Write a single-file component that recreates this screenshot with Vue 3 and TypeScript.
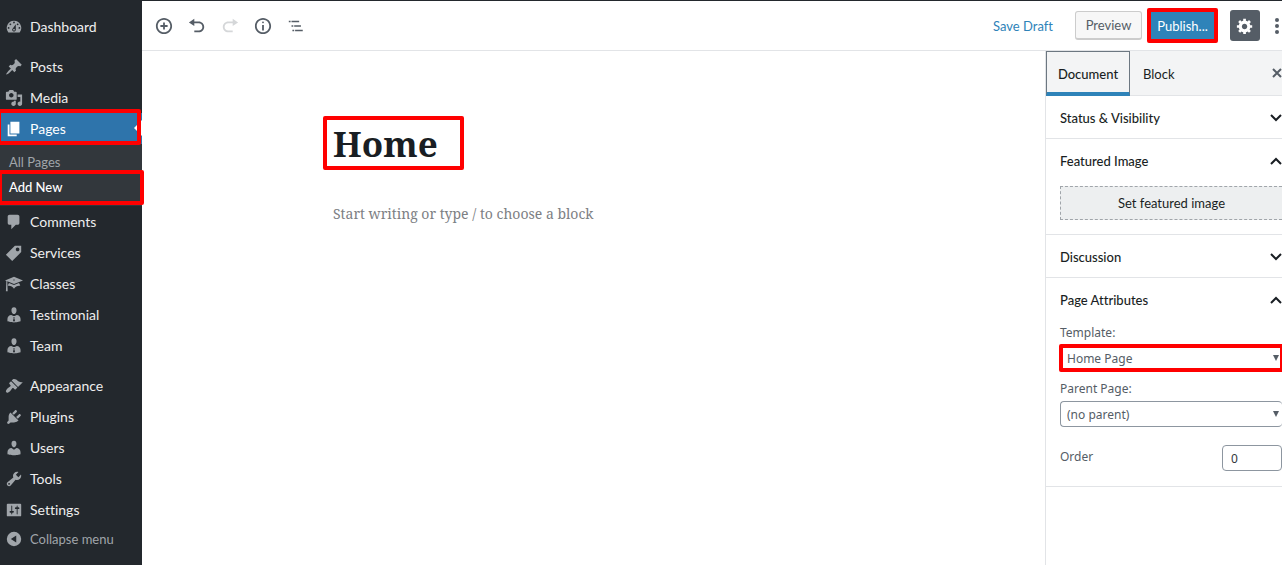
<script setup lang="ts">
import { ref } from 'vue'

interface MenuItem {
  label: string
  icon: string
  current?: boolean
}

const icons = {
  dashboard: 'M3.76 16h12.48A7.998 7.998 0 0 0 10 3a7.998 7.998 0 0 0-6.24 13zM10 4c.55 0 1 .45 1 1s-.45 1-1 1-1-.45-1-1 .45-1 1-1zM6 6c.55 0 1 .45 1 1s-.45 1-1 1-1-.45-1-1 .45-1 1-1zm8 0c.55 0 1 .45 1 1s-.45 1-1 1-1-.45-1-1 .45-1 1-1zm-5.37 5.55L12 7v6c0 1.1-.9 2-2 2s-2-.9-2-2c0-.57.24-1.08.63-1.45zM4 10c.55 0 1 .45 1 1s-.45 1-1 1-1-.45-1-1 .45-1 1-1zm12 0c.55 0 1 .45 1 1s-.45 1-1 1-1-.45-1-1 .45-1 1-1zm-5 3c0-.55-.45-1-1-1s-1 .45-1 1 .45 1 1 1 1-.45 1-1z',
  pin: 'M10.44 3.02l1.82-1.82 6.36 6.35-1.83 1.82c-1.05-.68-2.48-.57-3.41.36l-.75.75c-.92.93-1.04 2.35-.35 3.41l-1.83 1.82-2.41-2.41-2.8 2.79c-.42.42-3.38 2.71-3.8 2.29s1.86-3.39 2.28-3.81l2.79-2.79L4.1 9.36l1.83-1.82c1.05.69 2.48.57 3.4-.36l.75-.75c.93-.92 1.05-2.35.36-3.41z',
  media: 'M13 11V4c0-.55-.45-1-1-1h-1.67L9 1H5L3.67 3H2c-.55 0-1 .45-1 1v7c0 .55.45 1 1 1h10c.55 0 1-.45 1-1zM7 4.5c1.38 0 2.5 1.12 2.5 2.5S8.38 9.5 7 9.5 4.5 8.38 4.5 7 5.62 4.5 7 4.5zM14 6h5v10.5c0 1.38-1.12 2.5-2.5 2.5S14 17.88 14 16.5s1.12-2.5 2.5-2.5c.17 0 .34.02.5.05V9h-3V6zm-4 8.05V13h2v3.5c0 1.38-1.12 2.5-2.5 2.5S7 17.88 7 16.5 8.12 14 9.5 14c.17 0 .34.02.5.05z',
  page: 'M6 15V2h10v13H6zm-1 1h8v2H3V5h2v11z',
  comment: 'M5 2h9c1.1 0 2 .9 2 2v7c0 1.1-.9 2-2 2h-2l-5 5v-5H5c-1.1 0-2-.9-2-2V4c0-1.1.9-2 2-2z',
  tag: 'M11 2h7v7L8 19l-7-7zm3 6c1.1 0 2-.9 2-2s-.9-2-2-2-2 .9-2 2 .9 2 2 2z',
  learn: 'M10 10L2.54 7.02 3 18H1l.48-11.41L0 6l10-4 10 4zm0-5c-.55 0-1 .22-1 .5s.45.5 1 .5 1-.22 1-.5-.45-.5-1-.5zm0 6l5.57-2.23c.71.94 1.2 2.07 1.36 3.3-.3-.04-.61-.07-.93-.07-2.55 0-4.78 1.37-6 3.41C8.78 13.37 6.55 12 4 12c-.32 0-.63.03-.93.07.16-1.23.65-2.36 1.36-3.3z',
  business: 'M10 9C7.7 9 7.2 5.8 7.2 5.3 7 3.5 7.8 1.5 10 1.5s3 2 2.8 3.8C12.800 5.800 12.300 9 10 9zM7 10l2.200 1.200h1.600L13 10c2.500 0 4.300 2.200 4.300 4.500V17s-3.700 1.200-7.300 1.200S2.700 17 2.700 17v-2.500C2.700 12.200 4.500 10 7 10zm2.300 2.200.4 1.200-.8 3.100 1.100 1.100 1.100-1.100-.8-3.100.4-1.200z',
  brush: 'M14.48 11.06L7.41 3.99l1.5-1.5c.5-.56 2.3-.47 3.51.32 1.21.8 1.43 1.28 2.91 2.1 1.18.64 2.45 1.26 4.45.85zm-.71.71L6.7 4.7 4.93 6.47c-.39.39-.39 1.02 0 1.41l1.06 1.06c.39.39.39 1.03 0 1.42-.6.6-1.43 1.11-2.21 1.69-.35.26-.7.53-1.01.84C1.43 14.23.4 16.08 1.4 17.07c.99 1 2.84-.03 4.18-1.36.31-.31.58-.66.85-1.02.57-.78 1.08-1.61 1.69-2.21.39-.39 1.02-.39 1.41 0l1.06 1.06c.39.39 1.02.39 1.41 0z',
  plug: 'M13.11 4.36L9.87 7.6 8 5.73l3.24-3.24c.35-.34 1.05-.2 1.56.32.52.51.66 1.21.31 1.55zm-8 1.77l.91-1.12 9.01 9.01-1.19.84c-.71.71-2.63 1.16-3.82 1.16H6.14L4.9 17.26c-.59.59-1.54.59-2.12 0-.59-.58-.59-1.53 0-2.12l1.24-1.24v-3.88c0-1.13.4-3.19 1.09-3.89zm7.26 3.97l3.24-3.24c.34-.35 1.04-.21 1.55.31.52.51.66 1.21.31 1.55l-3.24 3.25z',
  user: 'M10 9.25c-2.27 0-2.73-3.44-2.73-3.44C7 4.02 7.82 2 9.97 2c2.16 0 2.98 2.02 2.71 3.81 0 0-.41 3.44-2.68 3.44zm0 2.57L12.72 10c2.39 0 4.52 2.33 4.52 4.53v2.49s-3.65 1.13-7.24 1.13c-3.65 0-7.24-1.13-7.24-1.13v-2.49c0-2.25 1.94-4.48 4.47-4.48z',
  wrench: 'M16.68 9.77c-1.34 1.34-3.3 1.67-4.95.99l-5.41 6.52c-.99.99-2.59.99-3.58 0s-.99-2.59 0-3.57l6.52-5.42c-.68-1.65-.35-3.61.99-4.95 1.28-1.28 3.12-1.62 4.72-1.06l-2.89 2.89 2.82 2.82 2.86-2.87c.53 1.58.18 3.39-1.08 4.65zM3.81 16.21c.4.39 1.04.39 1.43 0 .4-.4.4-1.04 0-1.43-.39-.4-1.03-.4-1.43 0-.39.39-.39 1.03 0 1.43z',
  sliders: 'M18 16V4c0-.55-.45-1-1-1H3c-.55 0-1 .45-1 1v12c0 .55.45 1 1 1h14c.55 0 1-.45 1-1zM8 11h1c.55 0 1 .45 1 1s-.45 1-1 1H8v1.5c0 .28-.22.5-.5.5s-.5-.22-.5-.5V13H6c-.55 0-1-.45-1-1s.45-1 1-1h1V5.5c0-.28.22-.5.5-.5s.5.22.5.5V11zm5-2h-1c-.55 0-1-.45-1-1s.45-1 1-1h1V5.5c0-.28.22-.5.5-.5s.5.22.5.5V7h1c.55 0 1 .45 1 1s-.45 1-1 1h-1v5.5c0 .28-.22.5-.5.5s-.5-.22-.5-.5V9z',
  collapse: 'M10 2a8 8 0 1 0 0 16 8 8 0 0 0 0-16zm2.500 4v8L6.500 10z',
  insert: 'M10 1c-5 0-9 4-9 9s4 9 9 9 9-4 9-9-4-9-9-9zm0 16c-3.9 0-7-3.1-7-7s3.1-7 7-7 7 3.1 7 7-3.1 7-7 7zm1-11H9v3H6v2h3v3h2v-3h3V9h-3V6z',
  undo: 'M12 5H7V2L1 6l6 4V7h5c2.2 0 4 1.8 4 4s-1.8 4-4 4H7v2h5c3.3 0 6-2.7 6-6s-2.7-6-6-6z',
  redo: 'M8 5h5V2l6 4-6 4V7H8c-2.2 0-4 1.8-4 4s1.800 4 4 4h5v2H8c-3.3 0-6-2.7-6-6s2.7-6 6-6z',
  info: 'M9 15h2V9H9v6zm1-10c-.5 0-1 .5-1 1s.5 1 1 1 1-.5 1-1-.5-1-1-1zm0-4c-5 0-9 4-9 9s4 9 9 9 9-4 9-9-4-9-9-9zm0 16c-3.900 0-7-3.100-7-7s3.100-7 7-7 7 3.100 7 7-3.100 7-7 7z',
  outline: 'M2 4.200h2v1.600H2zM5 4.200h8.500v1.600H5zM5 9.200h2v1.600H5zM8 9.200h7.500v1.600H8zM6 14.200h2v1.600H6zM9 14.200h8.500v1.600H9z',
  gear: 'M18 12h-2.18c-.17.7-.44 1.35-.81 1.93l1.54 1.54-2.1 2.1-1.54-1.54c-.58.36-1.23.63-1.91.79V19H8v-2.18c-.68-.16-1.33-.43-1.91-.79l-1.54 1.54-2.12-2.12 1.54-1.54c-.36-.58-.63-1.23-.79-1.91H1V9.03h2.17c.16-.7.44-1.35.8-1.94L2.43 5.55l2.1-2.1 1.54 1.54c.58-.37 1.24-.64 1.93-.81V2h3v2.18c.68.16 1.33.43 1.91.79l1.54-1.54 2.12 2.12-1.54 1.54c.36.59.64 1.24.8 1.94H18V12zm-8.500 1.500c1.660 0 3-1.340 3-3s-1.340-3-3-3-3 1.340-3 3 1.340 3 3 3z',
}

const groups: MenuItem[][] = [
  [{ label: 'Dashboard', icon: icons.dashboard }],
  [
    { label: 'Posts', icon: icons.pin },
    { label: 'Media', icon: icons.media },
    { label: 'Pages', icon: icons.page, current: true },
    { label: 'Comments', icon: icons.comment },
    { label: 'Services', icon: icons.tag },
    { label: 'Classes', icon: icons.learn },
    { label: 'Testimonial', icon: icons.business },
    { label: 'Team', icon: icons.business },
  ],
  [
    { label: 'Appearance', icon: icons.brush },
    { label: 'Plugins', icon: icons.plug },
    { label: 'Users', icon: icons.user },
    { label: 'Tools', icon: icons.wrench },
    { label: 'Settings', icon: icons.sliders },
  ],
]

const tools = [
  { label: 'Add block', icon: icons.insert, disabled: false },
  { label: 'Undo', icon: icons.undo, disabled: false },
  { label: 'Redo', icon: icons.redo, disabled: true },
  { label: 'Content structure', icon: icons.info, disabled: false },
  { label: 'Block navigation', icon: icons.outline, disabled: false },
]

const title = ref('Home')
const template = ref('Home Page')
const parent = ref('(no parent)')
const order = ref('0')
</script>

<template>
  <div class="app">
    <nav class="menu" aria-label="Main menu">
      <ul v-for="(group, g) in groups" :key="g" class="group">
        <li v-for="item in group" :key="item.label">
          <a href="#" class="item" :class="{ current: item.current, marked: item.current }">
            <svg viewBox="0 0 20 20" aria-hidden="true"><path :d="item.icon" fill-rule="evenodd" /></svg>
            <span>{{ item.label }}</span>
          </a>
          <ul v-if="item.current" class="submenu">
            <li><a href="#">All Pages</a></li>
            <li><a href="#" class="active marked">Add New</a></li>
          </ul>
        </li>
      </ul>
      <button type="button" class="collapse">
        <svg viewBox="0 0 20 20" aria-hidden="true"><path :d="icons.collapse" fill-rule="evenodd" /></svg>
        <span>Collapse menu</span>
      </button>
    </nav>

    <div class="editor">
      <header class="topbar">
        <div class="tools">
          <button v-for="tool in tools" :key="tool.label" type="button" :aria-label="tool.label" :disabled="tool.disabled">
            <svg viewBox="0 0 20 20" aria-hidden="true"><path :d="tool.icon" /></svg>
          </button>
        </div>
        <div class="actions">
          <button type="button" class="draft">Save Draft</button>
          <button type="button" class="preview">Preview</button>
          <button type="button" class="publish marked">Publish...</button>
          <button type="button" class="gear" aria-label="Settings">
            <svg viewBox="0 0 20 20" aria-hidden="true"><path :d="icons.gear" fill-rule="evenodd" /></svg>
          </button>
          <button type="button" class="more" aria-label="More options">
            <svg viewBox="0 0 6 18" aria-hidden="true"><circle cx="3" cy="3" r="2" /><circle cx="3" cy="9" r="2" /><circle cx="3" cy="15" r="2" /></svg>
          </button>
        </div>
      </header>

      <div class="body">
        <main class="canvas">
          <div class="title marked">
            <input v-model="title" type="text" aria-label="Page title" />
          </div>
          <p class="prompt">Start writing or type / to choose a block</p>
        </main>

        <aside class="panel">
          <div class="tabs">
            <button type="button" class="tab selected">Document</button>
            <button type="button" class="tab">Block</button>
            <button type="button" class="close" aria-label="Close settings">
              <svg viewBox="0 0 10 10" aria-hidden="true"><path d="M1 1l8 8M9 1L1 9" /></svg>
            </button>
          </div>

          <section>
            <button type="button" class="heading">
              Status &amp; Visibility
              <svg viewBox="0 0 12 8" aria-hidden="true"><path d="M1 1l5 5 5-5" /></svg>
            </button>
          </section>
          <section class="image">
            <button type="button" class="heading">
              Featured Image
              <svg viewBox="0 0 12 8" aria-hidden="true"><path d="M1 7l5-5 5 5" /></svg>
            </button>
            <button type="button" class="drop">Set featured image</button>
          </section>
          <section>
            <button type="button" class="heading">
              Discussion
              <svg viewBox="0 0 12 8" aria-hidden="true"><path d="M1 1l5 5 5-5" /></svg>
            </button>
          </section>
          <section class="attributes">
            <button type="button" class="heading">
              Page Attributes
              <svg viewBox="0 0 12 8" aria-hidden="true"><path d="M1 7l5-5 5 5" /></svg>
            </button>
            <label for="template">Template:</label>
            <div class="select marked">
              <select id="template" v-model="template"><option>Home Page</option></select>
              <svg viewBox="0 0 6 6" aria-hidden="true"><path d="M0 0h6L3 6z" /></svg>
            </div>
            <label for="parent">Parent Page:</label>
            <div class="select">
              <select id="parent" v-model="parent"><option>(no parent)</option></select>
              <svg viewBox="0 0 6 6" aria-hidden="true"><path d="M0 0h6L3 6z" /></svg>
            </div>
            <div class="order">
              <label for="order">Order</label>
              <input id="order" v-model="order" type="text" inputmode="numeric" />
            </div>
          </section>
        </aside>
      </div>
    </div>
  </div>
</template>

<style>
body {
  margin: 0;
}
</style>

<style scoped>
* {
  box-sizing: border-box;
}
.app {
  display: flex;
  min-height: 100vh;
  overflow: hidden;
  background: #fff;
  border-top: 1px solid #23282d;
  font-family: Lato, "Open Sans", sans-serif;
  font-size: 13px;
  font-variant-ligatures: none;
  color: #191e23;
}
button,
input,
select {
  margin: 0;
  padding: 0;
  border: 0;
  background: none;
  font: inherit;
  font-variant-ligatures: none;
  color: inherit;
}
ul {
  margin: 0;
  padding: 0;
  list-style: none;
}
a {
  color: inherit;
  text-decoration: none;
}
svg {
  display: block;
  flex: none;
  fill: currentColor;
}

/* Red highlight frames */
.marked {
  position: relative;
}
.marked::after {
  content: "";
  position: absolute;
  inset: -4px;
  border: 4px solid #f00;
  border-radius: 2px;
  pointer-events: none;
  z-index: 2;
}

.menu {
  flex: none;
  width: 142px;
  padding-top: 10px;
  background: #23282d;
  color: #eee;
  font-size: 14px;
}
.group {
  margin-bottom: 9px;
}
.group:last-of-type {
  margin-bottom: 0;
}
.item,
.collapse {
  display: flex;
  align-items: center;
  gap: 7px;
  height: 31px;
  padding-left: 5px;
}
.item svg,
.collapse svg {
  width: 18px;
  height: 18px;
  color: #a0a5aa;
}
.item.current {
  background: #2e74ab;
  color: #fff;
}
.item.current svg {
  color: #fff;
}
.item.current::before {
  content: "";
  position: absolute;
  right: 0;
  top: 7px;
  border: 8px solid transparent;
  border-right-color: #fff;
  border-left-width: 0;
}
.item.current::after {
  inset: -4px 1px -1px -3px;
}
.submenu {
  padding: 6px 0;
  background: #32373c;
  color: #a0a5aa;
  font-size: 13px;
}
.submenu a {
  display: block;
  height: 25px;
  padding-left: 9px;
  line-height: 25px;
}
.submenu .active {
  color: #fff;
  font-weight: 500;
}
.submenu .active::after {
  inset: -5px -2px -5px -2px;
}
.collapse {
  height: 27px;
  color: #a0a5aa;
  font-size: 13px;
}

.editor {
  flex: 1;
  min-width: 0;
  display: flex;
  flex-direction: column;
}
.topbar {
  display: flex;
  align-items: center;
  justify-content: space-between;
  height: 50px;
  padding: 0 2px 0 13px;
  border-bottom: 1px solid #e2e4e7;
  color: #555d66;
}
.tools {
  display: flex;
  gap: 15px;
}
.tools svg {
  width: 18px;
  height: 18px;
}
.tools button:disabled {
  color: #d5d7d9;
}
.actions {
  display: flex;
  align-items: center;
}
.draft {
  margin-right: 22px;
  color: #2e83b9;
}
.preview {
  width: 67px;
  height: 29px;
  margin-right: 9px;
  border: 1px solid #ccc;
  border-bottom-width: 2px;
  border-radius: 3px;
  background: #f7f7f7;
}
.publish {
  width: 63px;
  height: 27px;
  margin-right: 16px;
  background: #2e83b9;
  color: #fff;
}
.gear {
  display: grid;
  place-items: center;
  width: 30px;
  height: 31px;
  margin-right: 14px;
  border-radius: 3px;
  background: #555d66;
  color: #fff;
}
.gear svg {
  width: 18px;
  height: 18px;
}
.more svg {
  width: 6px;
  height: 18px;
}

.body {
  flex: 1;
  display: flex;
}
.canvas {
  flex: 1;
  min-width: 0;
  padding: 69px 24px 0 185px;
  font-family: "Noto Serif", "Liberation Serif", serif;
}
.title {
  width: 133px;
  height: 46px;
}
.title input {
  width: 100%;
  height: 100%;
  padding-left: 6px;
  font-size: 35px;
  font-weight: 700;
  outline: 0;
}
.prompt {
  margin: 38px 0 0 6px;
  font-size: 14px;
  line-height: 20px;
  color: #7d8084;
}

.panel {
  flex: none;
  width: 237px;
  border-left: 1px solid #e2e4e7;
}
.tabs {
  display: flex;
  align-items: center;
  height: 45px;
  border-bottom: 1px solid #e2e4e7;
  background: #f3f4f5;
}
.tab {
  height: 45px;
  padding: 0 13px;
  align-self: flex-start;
}
.selected {
  width: 84px;
  padding: 3px 0 0;
  border: 1px solid #6c7781;
  border-bottom: 4px solid #2e83b9;
  font-weight: 500;
}
.close {
  margin-left: auto;
}
.close svg {
  width: 10px;
  height: 10px;
  stroke: #555d66;
  stroke-width: 2;
}
section {
  padding-left: 14px;
  border-bottom: 1px solid #e2e4e7;
}
.heading {
  display: flex;
  align-items: center;
  justify-content: space-between;
  width: 100%;
  height: 42px;
  padding-top: 1px;
  font-weight: 500;
}
.heading svg {
  width: 12px;
  height: 8px;
  fill: none;
  stroke: currentColor;
  stroke-width: 2;
}
.image {
  padding-bottom: 14px;
}
.drop {
  width: 100%;
  height: 34px;
  margin-top: 5px;
  border: 1px dashed #a0a5aa;
  border-right: 0;
  background: #edeff0;
}
.attributes {
  padding-bottom: 15px;
  font-family: "Noto Sans", sans-serif;
  font-size: 12px;
  color: #555d66;
}
.attributes .heading {
  height: 43px;
  padding-top: 0;
  font-family: Lato, "Open Sans", sans-serif;
  font-size: 13px;
  color: #191e23;
}
.attributes label {
  display: block;
  line-height: 24px;
}
.select {
  display: flex;
  align-items: center;
  height: 26px;
  margin-bottom: 6px;
  padding-right: 3px;
  border: 1px solid #8d96a0;
  border-right: 0;
  border-radius: 4px;
}
.select select {
  flex: 1;
  height: 24px;
  padding-left: 6px;
  appearance: none;
}
.select svg {
  width: 6px;
  height: 6px;
}
.select.marked::after {
  inset: -2px -2px -2px -2px;
}
.order {
  display: flex;
  align-items: flex-start;
  justify-content: space-between;
  margin-top: 18px;
}
.order input {
  width: 60px;
  height: 26px;
  padding-left: 8px;
  border: 1px solid #8d96a0;
  border-radius: 4px;
  color: #32373c;
}
</style>
